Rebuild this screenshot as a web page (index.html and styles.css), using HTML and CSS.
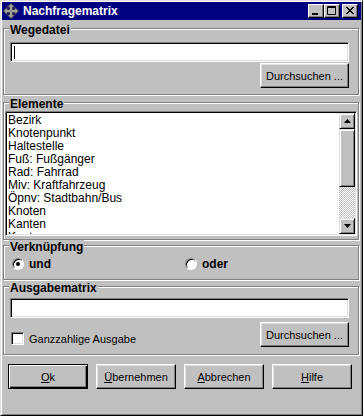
FILE: index.html
```html
<!DOCTYPE html>
<html lang="de">
  <head>
    <meta charset="UTF-8" />
    <title>Nachfragematrix</title>
    <link rel="stylesheet" href="styles.css">
  </head>
  <body>
    <div class="window">
      <!-- title bar -->
      <div class="titlebar">
        <svg class="app-icon" width="16" height="16" viewBox="0 0 16 16">
          <path d="M8 0.5 L11.5 4 L9.5 4 L9.5 6.5 L12 6.5 L12 4.5 L15.5 8 L12 11.5 L12 9.5 L9.5 9.5 L9.5 12 L11.5 12 L8 15.5 L4.5 12 L6.5 12 L6.5 9.5 L4 9.5 L4 11.5 L0.5 8 L4 4.5 L4 6.5 L6.5 6.5 L6.5 4 L4.5 4 Z" fill="#c0c0c0" stroke="#404040" stroke-width="1" stroke-linejoin="miter"/>
          <path d="M8 2 L8 14 M2 8 L14 8" stroke="#808080" stroke-width="1"/>
        </svg>
        <span class="caption">Nachfragematrix</span>
        <div class="caption-buttons">
          <span class="cap-btn">
            <svg width="14" height="12" viewBox="0 0 14 12"><rect x="3" y="8" width="6" height="2" fill="#000"/></svg>
          </span>
          <span class="cap-btn">
            <svg width="14" height="12" viewBox="0 0 14 12"><path d="M2.5 1.5 H10.5 V9.5 H2.5 Z M2.5 2.5 H10.5" fill="none" stroke="#000" stroke-width="1"/></svg>
          </span>
          <span class="cap-btn cap-close">
            <svg width="14" height="12" viewBox="0 0 14 12"><path d="M3 2 L10 9 M4 2 L11 9 M10 2 L3 9 M11 2 L4 9" stroke="#000" stroke-width="1"/></svg>
          </span>
        </div>
      </div>

      <!-- Wegedatei -->
      <div class="group group-weg">
        <div class="group-title">Wegedatei</div>
        <div class="field"><span class="caret"></span></div>
        <div class="btn btn-browse">Durchsuchen ...</div>
      </div>

      <!-- Elemente -->
      <div class="group group-elem">
        <div class="group-title">Elemente</div>
        <div class="listbox">
          <ul class="items">
            <li>Bezirk</li>
            <li>Knotenpunkt</li>
            <li>Haltestelle</li>
            <li>Fuß: Fußgänger</li>
            <li>Rad: Fahrrad</li>
            <li>Miv: Kraftfahrzeug</li>
            <li>Öpnv: Stadtbahn/Bus</li>
            <li>Knoten</li>
            <li>Kanten</li>
            <li>Knoten</li>
          </ul>
          <div class="scrollbar">
            <div class="sb-btn">
              <svg width="7" height="4" viewBox="0 0 7 4"><path d="M3.5 0 L7 4 L0 4 Z" fill="#000"/></svg>
            </div>
            <div class="sb-thumb"></div>
            <div class="sb-track"></div>
            <div class="sb-btn">
              <svg width="7" height="4" viewBox="0 0 7 4"><path d="M0 0 L7 0 L3.5 4 Z" fill="#000"/></svg>
            </div>
          </div>
        </div>
      </div>

      <!-- Verknuepfung -->
      <div class="group group-op">
        <div class="group-title">Verknüpfung</div>
        <div class="radios">
          <label class="radio"><span class="radio-dot checked"></span>und</label>
          <label class="radio"><span class="radio-dot"></span>oder</label>
        </div>
      </div>

      <!-- Ausgabematrix -->
      <div class="group group-out">
        <div class="group-title">Ausgabematrix</div>
        <div class="field"></div>
        <div class="out-row">
          <label class="check"><span class="check-box"></span>Ganzzahlige Ausgabe</label>
          <div class="btn btn-browse">Durchsuchen ...</div>
        </div>
      </div>

      <!-- dialog buttons -->
      <div class="actions">
        <div class="btn btn-action btn-default"><u>O</u>k</div>
        <div class="btn btn-action"><u>Ü</u>bernehmen</div>
        <div class="btn btn-action"><u>A</u>bbrechen</div>
        <div class="btn btn-action"><u>H</u>ilfe</div>
      </div>
    </div>
  </body>
</html>
```

FILE: styles.css
```css
body {
  margin: 0;
  background: #fff;
  font-family: "Liberation Sans", Arial, sans-serif;
  font-size: 11px;
  color: #000;
}

.window {
  box-sizing: border-box;
  width: 363px;
  height: 416px;
  padding: 1px;
  background: #c0c0c0;
  border: 1px solid;
  border-color: #dfdfdf #000 #000 #dfdfdf;
  box-shadow: inset 1px 1px 0 #fff, inset -1px -1px 0 #808080;
  display: flex;
  flex-direction: column;
}

/* title bar */
.titlebar {
  height: 18px;
  background: #000080;
  display: flex;
  align-items: center;
  padding: 0 3px 0 1px;
  color: #fff;
}
.app-icon {
  flex: none;
  margin-right: 4px;
}
.caption {
  font-weight: bold;
  font-size: 12px;
  flex: 1;
}
.caption-buttons {
  display: flex;
}
.cap-btn {
  box-sizing: border-box;
  width: 16px;
  height: 14px;
  background: #c0c0c0;
  border: 1px solid;
  border-color: #fff #000 #000 #fff;
  box-shadow: inset -1px -1px 0 #808080;
  display: flex;
}
.cap-close {
  margin-left: 2px;
}

/* group boxes */
.group {
  border: 1px solid #808080;
  box-shadow: inset 1px 1px 0 #fff, 1px 1px 0 #fff;
  margin: 0 2px 0 1px;
  display: flex;
  flex-direction: column;
}
.group-title {
  align-self: flex-start;
  margin: -6px 0 0 5px;
  padding: 0 1px;
  background: #c0c0c0;
  font-weight: bold;
  font-size: 12px;
  line-height: 14px;
}
.group-weg {
  margin-top: 8px;
  padding-bottom: 6px;
}
.group-elem {
  margin-top: 7px;
  padding-bottom: 3px;
}
.group-op {
  margin-top: 5px;
  padding-bottom: 9px;
}
.group-out {
  margin-top: 6px;
  padding-bottom: 7px;
}

/* sunken edit field */
.field {
  box-sizing: border-box;
  height: 20px;
  margin: 5px 9px 0 6px;
  background: #fff;
  border: 1px solid;
  border-color: #808080 #fff #fff #808080;
  box-shadow: inset 1px 1px 0 #000, inset -1px -1px 0 #dfdfdf;
  padding: 3px 0 0 3px;
}
.group-out .field {
  margin-top: 3px;
}
.caret {
  display: block;
  width: 1px;
  height: 13px;
  background: #000;
}

/* push buttons */
.btn {
  box-sizing: border-box;
  height: 25px;
  background: #c0c0c0;
  border: 1px solid;
  border-color: #fff #000 #000 #fff;
  box-shadow: inset -1px -1px 0 #808080, inset 1px 1px 0 #dfdfdf;
  display: flex;
  align-items: center;
  justify-content: center;
  font-size: 11px;
}
.btn-browse {
  align-self: flex-end;
  width: 89px;
  margin: 1px 9px 0 0;
}
.btn-default {
  border-color: #000;
  box-shadow: inset 1px 1px 0 #fff, inset -1px -1px 0 #000, inset -2px -2px 0 #808080;
}

/* list box */
.listbox {
  box-sizing: border-box;
  height: 125px;
  margin: 0 1px;
  padding: 1px;
  background: #fff;
  border: 1px solid;
  border-color: #808080 #fff #fff #808080;
  box-shadow: inset 1px 1px 0 #000, inset -1px -1px 0 #dfdfdf;
  display: flex;
}
.items {
  flex: 1;
  list-style: none;
  margin: 0;
  padding: 1px 0 0 1px;
  overflow: hidden;
  font-size: 12px;
  line-height: 13px;
  white-space: nowrap;
}
.scrollbar {
  width: 16px;
  display: flex;
  flex-direction: column;
}
.sb-btn,
.sb-thumb {
  box-sizing: border-box;
  background: #c0c0c0;
  border: 1px solid;
  border-color: #dfdfdf #000 #000 #dfdfdf;
  box-shadow: inset 1px 1px 0 #fff, inset -1px -1px 0 #808080;
}
.sb-btn {
  height: 16px;
  display: flex;
  align-items: center;
  justify-content: center;
}
.sb-thumb {
  height: 58px;
}
.sb-track {
  flex: 1;
  background: repeating-conic-gradient(#c0c0c0 0 25%, #fff 0 50%) 0 0 / 2px 2px;
}

/* radios */
.radios {
  display: grid;
  grid-template-columns: 173px 1fr;
  padding-left: 8px;
  margin-top: 4px;
}
.radio {
  display: flex;
  align-items: center;
  font-weight: bold;
  font-size: 12px;
  line-height: 12px;
}
.radio-dot {
  box-sizing: border-box;
  width: 12px;
  height: 12px;
  margin-right: 5px;
  border-radius: 50%;
  background: #fff;
  border: 1px solid;
  border-color: #808080 #fff #fff #808080;
  box-shadow: inset 1px 1px 0 #000;
  display: flex;
  align-items: center;
  justify-content: center;
}
.radio-dot.checked::after {
  content: "";
  width: 4px;
  height: 4px;
  border-radius: 50%;
  background: #000;
}

/* output row */
.out-row {
  display: flex;
  align-items: flex-end;
  justify-content: space-between;
  margin-top: 4px;
}
.out-row .btn-browse {
  margin-top: 0;
}
.check {
  display: flex;
  align-items: center;
  margin: 0 0 2px 7px;
  font-size: 11px;
}
.check-box {
  box-sizing: border-box;
  width: 13px;
  height: 13px;
  margin-right: 5px;
  background: #fff;
  border: 1px solid;
  border-color: #808080 #fff #fff #808080;
  box-shadow: inset 1px 1px 0 #000, inset -1px -1px 0 #dfdfdf;
}

/* dialog buttons */
.actions {
  display: flex;
  gap: 8px;
  margin-top: 9px;
  padding-left: 6px;
}
.btn-action {
  width: 80px;
}
u {
  text-decoration: underline;
}
```
